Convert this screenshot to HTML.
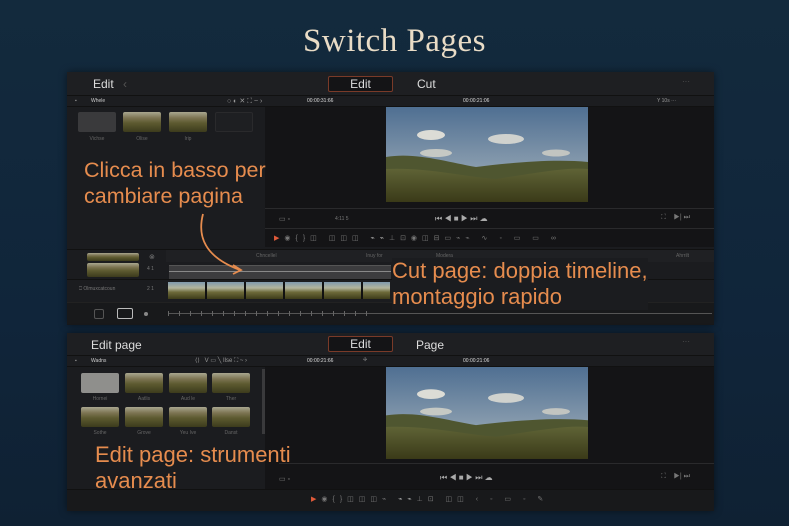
<!DOCTYPE html>
<html><head><meta charset="utf-8"><style>
*{margin:0;padding:0;box-sizing:border-box}
body{width:789px;height:526px;background:linear-gradient(180deg,#132a3d 0%,#10253a 60%,#0f2133 100%);position:relative;overflow:hidden;font-family:"Liberation Sans",sans-serif;color:#bbb}
.abs{position:absolute}
.panel{position:absolute;left:67px;width:647px;background:#1b1c1f;border-radius:3px;box-shadow:0 0 8px rgba(0,0,0,.5)}
.top{position:absolute;left:0;top:0;width:100%;background:#1e1f22;border-bottom:1px solid #111}
.tab{position:absolute;font-size:12px;color:#ddd;text-align:center}
.tabsel{border:1px solid #7a3a28;border-radius:2px;background:#141416}
.tb{position:absolute;left:0;width:100%;height:11px;background:#1c1d20;font-size:5px;color:#999;border-bottom:1px solid #111}
.thumb{position:absolute;width:38px;height:20px;border-radius:2px;background:linear-gradient(180deg,#a9a78f 0%,#7c7452 30%,#5d5a30 55%,#3c3b1c 100%)}
.lab{position:absolute;font-size:5px;color:#666;text-align:center;width:40px}
.video{position:absolute}
.orange{position:absolute;color:#e68c4e;line-height:26px;font-family:"Liberation Sans",sans-serif}
.ic{position:absolute;font-size:7px;color:#777}
</style></head><body>
<svg width="0" height="0" style="position:absolute"><defs>
<linearGradient id="sky" x1="0" y1="0" x2="0" y2="1"><stop offset="0" stop-color="#4f6f92"/><stop offset="1" stop-color="#aab6be"/></linearGradient>
<linearGradient id="gr" x1="0" y1="0" x2="0" y2="1"><stop offset="0" stop-color="#5f6336"/><stop offset="1" stop-color="#3a3a18"/></linearGradient>
<symbol id="land" viewBox="0 0 202 95" preserveAspectRatio="none">
<rect width="202" height="95" fill="url(#sky)"/>
<ellipse cx="45" cy="28" rx="14" ry="5" fill="#dcdcd6"/><ellipse cx="120" cy="32" rx="18" ry="5" fill="#d0d2ce"/><ellipse cx="50" cy="46" rx="16" ry="4" fill="#c6c9c4"/><ellipse cx="170" cy="46" rx="14" ry="3.5" fill="#c2c5c1"/>
<path d="M0 50 C30 45,60 55,90 60 C130 55,170 52,202 55 L202 95 L0 95Z" fill="#4f5630"/>
<path d="M0 62 C40 60,80 70,110 72 C150 66,180 60,202 62 L202 95 L0 95Z" fill="url(#gr)"/>
</symbol></defs></svg>
<div class="abs" style="left:0;top:23px;width:789px;text-align:center;font-family:'Liberation Serif',serif;font-size:33px;color:#e9dcc6;letter-spacing:.5px">Switch Pages</div>

<div class="panel" style="top:72px;height:253px">
 <div class="top" style="height:24px">
  <div class="tab" style="left:26px;top:5px">Edit <span style="color:#555;margin-left:6px">‹</span></div>
  <div class="tab tabsel" style="left:261px;top:4px;width:65px;height:16px;line-height:14px">Edit</div>
  <div class="tab" style="left:350px;top:5px">Cut</div>
  <div class="tab" style="left:615px;top:5px;color:#555;font-size:8px">···</div>
 </div>
 <div class="tb" style="top:24px"><span style="position:absolute;left:8px;top:2px">▪</span><span style="position:absolute;left:24px;top:2px;color:#ccc">Whele</span><span style="position:absolute;left:160px;top:1px;font-size:7px">○ ◐ ✕ ⛶ ~ ›</span><span style="position:absolute;left:240px;top:2px;color:#ddd">00:00:31:66</span><span style="position:absolute;left:396px;top:2px;color:#ddd">00:00:21:06</span><span style="position:absolute;left:590px;top:2px">Y 10s ···</span></div>
 <div class="abs" style="left:198px;top:35px;width:449px;height:140px;background:#141416"></div>
 <svg class="video" style="left:319px;top:35px" width="202" height="95"><use href="#land" width="202" height="95"/></svg>
 <div class="thumb" style="left:11px;top:40px;background:#3a3a3c"></div>
 <div class="thumb" style="left:56px;top:40px"></div>
 <div class="thumb" style="left:102px;top:40px"></div>
 <div class="thumb" style="left:148px;top:40px;background:#1e1f22;border:1px solid #2a2a2c"></div>
 <div class="lab" style="left:10px;top:64px">Vichse</div><div class="lab" style="left:55px;top:64px">Olise</div><div class="lab" style="left:101px;top:64px">Irip</div>
 <div class="abs" style="left:198px;top:136px;width:449px;height:1px;background:#2a2a2c"></div>
 <div class="ic" style="left:212px;top:143px">▭ ▫</div><div class="ic" style="left:268px;top:144px;font-size:5px">4:11 5</div>
 <div class="ic" style="left:368px;top:142px;color:#aaa;font-size:8px">⏮ ◀ ■ ▶ ⏭ ☁</div>
 <div class="ic" style="left:594px;top:142px">⛶ &nbsp;&nbsp; ▶| ⏭</div>
 <div class="abs" style="left:198px;top:156px;width:449px;height:19px;border-top:1px solid #2a2a2c"></div>
 <div class="ic" style="left:207px;top:162px;letter-spacing:5px"><span style="color:#e05a3a">▶</span>◉{}◫ ◫◫◫ <span style="color:#bbb">⌁⌁</span>⊥⊡◉◫⊟▭⌁⌁ ∿ ◦ ▭ ▭ ∞</div>
 <div class="abs" style="left:0;top:177px;width:647px;height:1px;background:#111"></div>
 <div class="abs" style="left:99px;top:178px;width:548px;height:12px;background:#1f2023;font-size:5px;color:#666"><span style="position:absolute;left:90px;top:3px">Chncellel</span><span style="position:absolute;left:200px;top:3px">Inuy for</span><span style="position:absolute;left:270px;top:3px">Modera</span><span style="position:absolute;left:510px;top:3px">Ahrrilt</span></div>
 <div class="thumb" style="left:20px;top:181px;width:52px;height:8px"></div>
 <div class="thumb" style="left:20px;top:191px;width:52px;height:14px"></div>
 <div class="ic" style="left:82px;top:181px">⊗</div><div class="ic" style="left:80px;top:194px;font-size:5px">4 1</div>
 <div class="abs" style="left:102px;top:193px;width:222px;height:14px;background:#3c3c3e;border-top:1px solid #555"></div>
 <div class="abs" style="left:102px;top:199px;width:222px;height:1px;background:#888"></div>
 <div class="abs" style="left:0;top:207px;width:647px;height:1px;background:#111"></div>
 <div class="ic" style="left:12px;top:214px;font-size:5px">⎕ Olmuxcatcoun</div><div class="ic" style="left:80px;top:214px;font-size:5px">2 1</div>
 <div class="abs" style="left:101px;top:210px;width:222px;height:17px;background:repeating-linear-gradient(90deg,transparent 0 37px,#111 37px 39px),linear-gradient(180deg,#7f99ad 0%,#b2b49c 35%,#6d6a3a 60%,#3d3c1a 100%)"></div>
 <div class="abs" style="left:0;top:230px;width:647px;height:23px;background:#18191b;border-top:1px solid #222"></div>
 <div class="abs" style="left:27px;top:237px;width:10px;height:10px;border:1px solid #555;border-radius:2px"></div>
 <div class="abs" style="left:50px;top:236px;width:16px;height:11px;border:1px solid #bbb;border-radius:2px"></div>
 <div class="abs" style="left:77px;top:240px;width:4px;height:4px;background:#888;border-radius:50%"></div>
 <div class="abs" style="left:101px;top:241px;width:544px;height:1px;background:#555"></div>
 <div class="abs" style="left:101px;top:239px;width:200px;height:5px;background:repeating-linear-gradient(90deg,#666 0 1px,transparent 1px 11px)"></div>
</div>
<svg class="abs" style="left:195px;top:212px" width="55" height="65"><path d="M8 2 C2 25,10 45,45 58" stroke="#e68c4e" stroke-width="1.8" fill="none"/><path d="M38 53 L46 58 L38 62" stroke="#e68c4e" stroke-width="1.8" fill="none"/></svg>
<div class="orange" style="left:84px;top:157px;font-size:21.5px">Clicca in basso per<br>cambiare pagina</div>
<div class="orange" style="left:392px;top:258px;font-size:22px;background:#1b1c1f">Cut page: doppia timeline,<br>montaggio rapido</div>

<div class="panel" style="top:333px;height:178px">
 <div class="top" style="height:23px">
  <div class="tab" style="left:24px;top:5px">Edit page</div>
  <div class="tab tabsel" style="left:261px;top:3px;width:65px;height:16px;line-height:14px">Edit</div>
  <div class="tab" style="left:349px;top:5px">Page</div>
  <div class="tab" style="left:615px;top:4px;color:#555;font-size:8px">···</div>
 </div>
 <div class="tb" style="top:23px"><span style="position:absolute;left:8px;top:2px">▪</span><span style="position:absolute;left:24px;top:2px;color:#ccc">Wadns</span><span style="position:absolute;left:128px;top:1px;font-size:6px">⟨⟩ &nbsp; V ▭ ╲ Ilse ⛶ ~ ›</span><span style="position:absolute;left:240px;top:2px;color:#ddd">00:00:21:66</span><span style="position:absolute;left:296px;top:1px">✢</span><span style="position:absolute;left:396px;top:2px;color:#ddd">00:00:21:06</span></div>
 <div class="abs" style="left:198px;top:34px;width:449px;height:128px;background:#141416"></div>
 <svg class="video" style="left:319px;top:34px" width="202" height="92"><use href="#land" width="202" height="92"/></svg>
 <div class="abs" style="left:195px;top:36px;width:3px;height:65px;background:#3a3a3c"></div>
 <div class="thumb" style="left:14px;top:40px;background:#8f8f8c"></div>
 <div class="thumb" style="left:58px;top:40px"></div><div class="thumb" style="left:102px;top:40px"></div><div class="thumb" style="left:145px;top:40px"></div>
 <div class="thumb" style="left:14px;top:74px"></div><div class="thumb" style="left:58px;top:74px"></div><div class="thumb" style="left:102px;top:74px"></div><div class="thumb" style="left:145px;top:74px"></div>
 <div class="lab" style="left:13px;top:63px">Hornei</div><div class="lab" style="left:57px;top:63px">Aatlis</div><div class="lab" style="left:101px;top:63px">Aud le</div><div class="lab" style="left:144px;top:63px">Ther</div>
 <div class="lab" style="left:13px;top:97px">Sothe</div><div class="lab" style="left:57px;top:97px">Grove</div><div class="lab" style="left:101px;top:97px">Yeu Ive</div><div class="lab" style="left:144px;top:97px">Danst</div>
 <div class="abs" style="left:212px;top:130px;width:435px;height:1px;background:#2a2a2c"></div>
 <div class="ic" style="left:212px;top:142px">▭ ▫</div>
 <div class="ic" style="left:373px;top:140px;color:#aaa;font-size:8px">⏮ ◀ ■ ▶ ⏭ ☁</div>
 <div class="ic" style="left:594px;top:140px">⛶ &nbsp;&nbsp; ▶| ⏭</div>
 <div class="abs" style="left:0;top:156px;width:647px;height:22px;background:#18191b;border-top:1px solid #111"></div>
 <div class="ic" style="left:244px;top:162px;letter-spacing:5px"><span style="color:#e05a3a">▶</span>◉{}◫◫◫⌁ <span style="color:#bbb">⌁⌁</span>⊥⊡ ◫◫ ‹ ◦ ▭ ◦ ✎</div>
</div>
<div class="orange" style="left:95px;top:442px;font-size:22px">Edit page: strumenti<br>avanzati</div>
</body></html>
